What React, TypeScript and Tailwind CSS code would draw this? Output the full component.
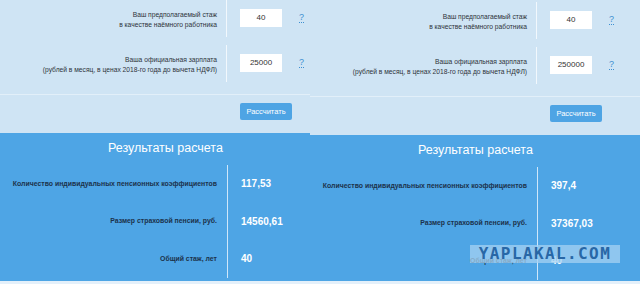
import React from "react";

type PanelProps = {
  right?: boolean;
  salary: string;
  r1: string;
  r2: string;
  r3: string;
};

function Question() {
  return (
    <span className="ml-[17px] text-[9px] leading-[10px] text-[#3d8fd1] border-b border-dotted border-[#3d8fd1]">
      ?
    </span>
  );
}

function FormRow({ l1, l2, value }: { l1: string; l2: string; value: string }) {
  return (
    <div className="flex h-[37px] items-stretch">
      <div className="w-[217px] flex flex-col justify-center items-end text-right text-[6.7px] leading-[9.5px] text-[#2e333a] pt-[2px] whitespace-nowrap">
        <span>{l1}</span>
        <span>{l2}</span>
      </div>
      <div className="ml-[9px] w-px bg-[#f2f8fd]" />
      <div className="ml-[13px] flex items-center pb-[2px]">
        <div className="w-[42px] h-[18px] bg-white flex items-center justify-center text-[8px] text-[#333] font-medium">
          {value}
        </div>
        <Question />
      </div>
    </div>
  );
}

function ResultRow({ label, value }: { label: string; value: string }) {
  return (
    <div className="flex h-[37.5px] items-stretch">
      <div className="w-[217px] flex items-center justify-end text-right text-[6.9px] font-bold text-[#1c324b] whitespace-nowrap">
        {label}
      </div>
      <div className="ml-[10px] w-px bg-[#cfe7fa]" />
      <div className="ml-[13px] flex items-center text-[10px] font-bold text-white">
        {value}
      </div>
    </div>
  );
}

function Panel({ right, salary, r1, r2, r3 }: PanelProps) {
  return (
    <div className={right ? "flex flex-col w-[330px] h-[284px]" : "flex flex-col w-[310px] h-[284px]"}>
      <div className={right ? "h-[135px] pt-[2px] bg-[#cfe4f4] flex flex-col" : "h-[133px] bg-[#cfe4f4] flex flex-col"}>
        <FormRow l1="Ваш предполагаемый стаж" l2="в качестве наёмного работника" value="40" />
        <div className="mt-[8px]">
          <FormRow
            l1="Ваша официальная зарплата"
            l2="(рублей в месяц, в ценах 2018-го года до вычета НДФЛ)"
            value={salary}
          />
        </div>
        <div className="mt-[12px] h-px bg-[#e2eff9]" />
        <div className="mt-[8px] pl-[240px]">
          <div className="w-[52px] h-[17px] rounded-[2px] bg-[#4ea4e4] text-white text-[7.5px] flex items-center justify-center">
            Рассчитать
          </div>
        </div>
      </div>
      <div className="relative flex-1 bg-[#4ea5e5] flex flex-col">
        <div className="h-[32px] pl-[108px] pb-[2px] flex items-center text-[12.5px] text-white">
          Результаты расчета
        </div>
        <ResultRow label="Количество индивидуальных пенсионных коэффициентов" value={r1} />
        <ResultRow label="Размер страховой пенсии, руб." value={r2} />
        <ResultRow label="Общий стаж, лет" value={r3} />
        {right ? (
          <div className="absolute left-[160px] top-[110px] w-[150px] h-[18px] bg-[#a6d1f2]/75 flex items-center justify-center">
            <span className="text-[16px] leading-[18px] font-bold text-[#2867a6] tracking-[1.4px] [font-family:'DejaVu_Sans_Mono',monospace]">
              YAPLAKAL.COM
            </span>
          </div>
        ) : null}
      </div>
      <div className="h-[3px] bg-[#e4f0fa]" />
    </div>
  );
}

export default function App() {
  return (
    <div className="w-[640px] h-[284px] overflow-hidden flex [font-family:'Liberation_Sans',Arial,sans-serif]">
      <Panel salary="25000" r1="117,53" r2="14560,61" r3="40" />
      <Panel right salary="250000" r1="397,4" r2="37367,03" r3="40" />
    </div>
  );
}
